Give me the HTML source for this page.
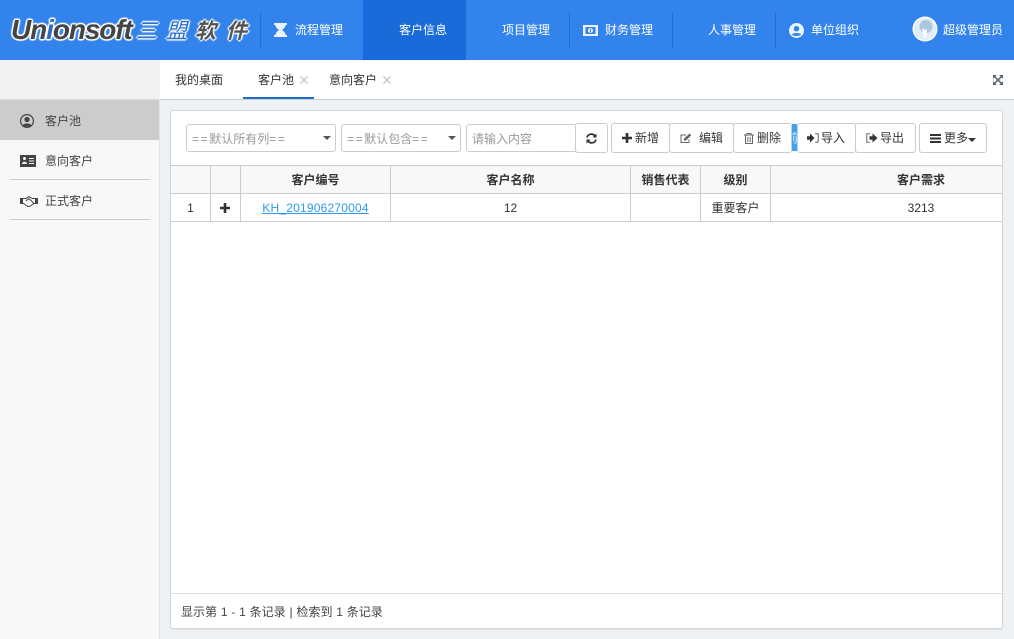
<!DOCTYPE html>
<html lang="zh-CN">
<head>
<meta charset="utf-8">
<title>客户池</title>
<style>
*{box-sizing:border-box}
html,body{margin:0;padding:0;width:1014px;height:639px;overflow:hidden;background:#eff2f4;font-family:"Liberation Sans","Noto Sans CJK SC",sans-serif;font-size:12px;color:#333}
.a{position:absolute;white-space:nowrap}
.hd{position:absolute;left:0;top:0;width:1014px;height:60px;background:#3383ed}
.sep{position:absolute;top:12px;width:1px;height:36px;background:#1f6fd6}
.nav{position:absolute;top:21px;line-height:18px;color:#fff;font-size:12px;white-space:nowrap}
.ni{position:absolute}
.box{position:absolute;border:1px solid #ccc;border-radius:3px;background:#fff;height:28px}
.btn{position:absolute;top:123px;height:30px;border:1px solid #ccc;border-radius:3px;background:#fff;line-height:29px;color:#333;white-space:nowrap}
.btn svg{position:absolute}
.btn span{position:absolute;top:0}
.ln{position:absolute;background:#ccc}
.cell{position:absolute;text-align:center;white-space:nowrap;line-height:30px}
.th{top:165px;font-weight:bold;color:#333}
.td{top:193px;color:#333}
.eq{letter-spacing:1.600px}
.lg{position:absolute;top:15px;font:italic bold 21px/30px 'Noto Sans CJK SC',sans-serif;color:#555;text-shadow:-1.500px 0 1px #fff,1.500px 0 1px #fff,0 -1.500px 1px #fff,0 1.500px 1px #fff}
.bl{color:#2a72d0;font-weight:normal}
</style>
</head>
<body>
<div class="hd"></div>
<div class="a" style="left:11px;top:12px;font:italic bold 28px/36px 'Liberation Sans',sans-serif;color:#454545;letter-spacing:-1.100px;text-shadow:-1.500px 0 1px #fff,1.500px 0 1px #fff,0 -1.500px 1px #fff,0 1.500px 1px #fff,-1px -1px 1px #fff,1px 1px 1px #fff,1px -1px 1px #fff,-1px 1px 1px #fff">Un<span style="color:#2a6dc0">i</span>onsoft</div>
<div class="lg bl" style="left:136px">三</div>
<div class="lg bl" style="left:166px">盟</div>
<div class="lg" style="left:195px">软</div>
<div class="lg" style="left:226px">件</div>

<div class="a" style="left:363px;top:0;width:103px;height:60px;background:#186bd9"></div>
<div class="sep" style="left:260px"></div>
<div class="sep" style="left:569px"></div>
<div class="sep" style="left:672px"></div>
<div class="sep" style="left:775px"></div>

<svg class="ni" style="left:274px;top:23px" width="13" height="14" viewBox="0 0 13 14"><path d="M0 0H13V2H11.500C11.500 5 9 6 8 7C9 8 11.500 9 11.500 12H13V14H0V12H1.500C1.500 9 4 8 5 7C4 6 1.500 5 1.500 2H0Z" fill="#eaf3ff"/></svg>
<div class="nav" style="left:295px">流程管理</div>
<div class="nav" style="left:399px">客户信息</div>
<div class="nav" style="left:502px">项目管理</div>
<svg class="ni" style="left:583px;top:25px" width="15" height="11" viewBox="0 0 15 11"><path fill-rule="evenodd" d="M0 0H15V11H0ZM2.500 2V9H12.500V2Z" fill="#eaf3ff"/><circle cx="7.500" cy="5.500" r="2.500" fill="#eaf3ff"/><path d="M7 4H8V7.500H7Z" fill="#3383ed"/></svg>
<div class="nav" style="left:605px">财务管理</div>
<div class="nav" style="left:708px">人事管理</div>
<svg class="ni" style="left:789px;top:23px" width="15" height="15" viewBox="0 0 15 15"><circle cx="7.500" cy="7.500" r="7.500" fill="#eaf3ff"/><circle cx="7.500" cy="5.700" r="2.700" fill="#3383ed"/><path d="M3 11.700C4 9.500 11 9.500 12 11.700C10.500 13.300 4.500 13.300 3 11.700Z" fill="#3383ed"/></svg>
<div class="nav" style="left:811px">单位组织</div>
<svg class="ni" style="left:912px;top:16px" width="26" height="26" viewBox="0 0 26 26"><circle cx="13" cy="13" r="12.500" fill="#fff"/><circle cx="13" cy="13" r="11" fill="#e0edf6"/><circle cx="14" cy="10.500" r="6.500" fill="#a9c9de"/><path d="M10 12C12 14 13 14 15 13L14 22H12Z" fill="#fff"/></svg>
<div class="nav" style="left:943px">超级管理员</div>

<!-- tab bar -->
<div class="a" style="left:0;top:60px;width:160px;height:40px;background:#f2f2f2;border-bottom:1px solid #ddd"></div>
<div class="a" style="left:160px;top:60px;width:854px;height:40px;background:#fff;border-bottom:1px solid #d0d0d0"></div>
<div class="a" style="left:175px;top:71px;line-height:18px;color:#333">我的桌面</div>
<div class="a" style="left:258px;top:71px;line-height:18px;color:#333">客户池</div>
<div class="a" style="left:243px;top:97px;width:71px;height:2px;background:#1e6fd0"></div>
<svg class="a" style="left:300px;top:76px" width="8" height="8" viewBox="0 0 8 8"><path d="M.5.500L7.500 7.500M7.500.500L.5 7.500" stroke="#c4c4c4" stroke-width="1.300"/></svg>
<div class="a" style="left:329px;top:71px;line-height:18px;color:#333">意向客户</div>
<svg class="a" style="left:383px;top:76px" width="8" height="8" viewBox="0 0 8 8"><path d="M.5.500L7.500 7.500M7.500.500L.5 7.500" stroke="#c4c4c4" stroke-width="1.300"/></svg>
<svg class="a" style="left:993px;top:75px" width="10" height="10" viewBox="0 0 10 10"><path d="M0 0H3.800L0 3.800ZM10 0V3.800L6.200 0ZM0 10V6.200L3.800 10ZM10 10H6.200L10 6.200Z" fill="#56606c"/><path d="M1.500 1.500L8.500 8.500M8.500 1.500L1.500 8.500" stroke="#56606c" stroke-width="1.500"/></svg>

<!-- sidebar -->
<div class="a" style="left:0;top:100px;width:160px;height:539px;background:#f8f8f8;border-right:1px solid #e2e5e7"></div>
<div class="a" style="left:0;top:100px;width:159px;height:40px;background:#ccc"></div>
<svg class="a" style="left:20px;top:114px" width="14" height="14" viewBox="0 0 14 14"><circle cx="7" cy="7" r="6.400" fill="none" stroke="#444" stroke-width="1.200"/><circle cx="7" cy="5.500" r="2.600" fill="#444"/><path d="M2.500 11.500C3.500 8.800 10.500 8.800 11.500 11.500C10 13.300 4 13.300 2.500 11.500Z" fill="#444"/></svg>
<div class="a" style="left:45px;top:112px;line-height:18px;color:#444">客户池</div>
<svg class="a" style="left:20px;top:155px" width="16" height="12" viewBox="0 0 16 12"><path fill-rule="evenodd" d="M0 0H16V12H0ZM3 3.500A1.500 1.500 0 0 0 6 3.500A1.500 1.500 0 0 0 3 3.500ZM2 9H7C7 6 2 6 2 9ZM9 3V4H14V3ZM9 5.500V6.500H14V5.500ZM9 8V9H14V8Z" fill="#444"/></svg>
<div class="a" style="left:45px;top:152px;line-height:18px;color:#444">意向客户</div>
<div class="ln" style="left:10px;top:179px;width:140px;height:1px"></div>
<svg class="a" style="left:20px;top:195px" width="18" height="12" viewBox="0 0 18 12"><path d="M0 3H2.500V9H0ZM15.500 3H18V9H15.500Z" fill="#444"/><path d="M2.500 3.500L6 3.500L9 1.500L12 3.500H15.500V8.500H14L9.500 11.500H8L3.500 8.500H2.500Z M6 6L8.500 3.800L10.500 5L14 8.500" fill="none" stroke="#444" stroke-width="1"/></svg>
<div class="a" style="left:45px;top:192px;line-height:18px;color:#444">正式客户</div>
<div class="ln" style="left:10px;top:219px;width:140px;height:1px"></div>

<!-- panel -->
<div class="a" style="left:170px;top:110px;width:833px;height:519px;background:#fff;border:1px solid #d6d6d6;border-radius:3px;box-shadow:0 1px 1px rgba(0,0,0,.08)"></div>

<!-- toolbar -->
<div class="box" style="left:186px;top:124px;width:150px"></div>
<div class="a" style="left:192px;top:131px;line-height:16px;color:#999"><span class="eq">==</span>默认所有列<span class="eq">==</span></div>
<div class="a" style="left:323px;top:136px;width:0;height:0;border-left:4px solid transparent;border-right:4px solid transparent;border-top:4px solid #555"></div>
<div class="box" style="left:341px;top:124px;width:120px"></div>
<div class="a" style="left:347px;top:131px;line-height:16px;color:#999"><span class="eq">==</span>默认包含<span class="eq">==</span></div>
<div class="a" style="left:448px;top:136px;width:0;height:0;border-left:4px solid transparent;border-right:4px solid transparent;border-top:4px solid #555"></div>
<div class="box" style="left:466px;top:124px;width:112px"></div>
<div class="a" style="left:472px;top:131px;line-height:16px;color:#999">请输入内容</div>

<div class="btn" style="left:575px;width:33px"><svg style="left:10px;top:9px" width="11" height="11" viewBox="0 0 11 11"><path d="M1 4.500A4.500 4.500 0 0 1 9 3M10 6.500A4.500 4.500 0 0 1 2 8" fill="none" stroke="#333" stroke-width="1.700"/><path d="M10.500 .5V4.500H6.500ZM.5 10.500V6.500H4.500Z" fill="#333"/></svg></div>
<div class="btn" style="left:611px;width:59px"><svg style="left:10px;top:9px" width="10" height="10" viewBox="0 0 10 10"><path d="M3.700 0H6.300V3.700H10V6.300H6.300V10H3.700V6.300H0V3.700H3.700Z" fill="#333"/></svg><span style="left:23px">新增</span></div>
<div class="btn" style="left:669px;width:65px"><svg style="left:10px;top:9px" width="12" height="11" viewBox="0 0 12 11"><path d="M9 6.500V9.500H1V2H6" fill="none" stroke="#666" stroke-width="1"/><path d="M4 5.500L9.500 .5L11.300 2.200L6 7.500H4Z" fill="#666"/></svg><span style="left:29px">编辑</span></div>
<div class="btn" style="left:733px;width:59px"><svg style="left:10px;top:9px" width="10" height="11" viewBox="0 0 10 11"><path d="M0 2H10M3 2V.5H7V2M1.500 2.500V10.500H8.500V2.500M3.800 4V9M6.200 4V9" fill="none" stroke="#666" stroke-width="1"/></svg><span style="left:23px">删除</span></div>
<div class="a" style="left:792px;top:124px;width:5px;height:27px;background:#3ea3f2;overflow:hidden;color:#dff0ff;line-height:28px;text-indent:-6px">前</div>
<div class="btn" style="left:797px;width:59px"><svg style="left:9px;top:9px" width="12" height="10" viewBox="0 0 12 10"><path d="M0 3.200H3V.5L7.500 5L3 9.500V6.800H0Z" fill="#333"/><path d="M8 .8H11.200V9.200H8" fill="none" stroke="#555" stroke-width=".9"/></svg><span style="left:23px">导入</span></div>
<div class="btn" style="left:855px;width:61px"><svg style="left:10px;top:9px" width="12" height="10" viewBox="0 0 12 10"><path d="M4 .8H.8V9.200H4" fill="none" stroke="#555" stroke-width=".9"/><path d="M3.500 3.200H6.500V.5L11.500 5L6.500 9.500V6.800H3.500Z" fill="#333"/></svg><span style="left:24px">导出</span></div>
<div class="btn" style="left:919px;width:68px"><svg style="left:10px;top:10px" width="11" height="9" viewBox="0 0 11 9"><path d="M0 0H11V2H0ZM0 3.500H11V5.500H0ZM0 7H11V9H0Z" fill="#333"/></svg><span style="left:24px">更多</span><div style="position:absolute;left:48px;top:14px;width:0;height:0;border-left:4px solid transparent;border-right:4px solid transparent;border-top:4px solid #333"></div></div>

<!-- table -->
<div class="a" style="left:171px;top:165px;width:831px;height:28px;background:#f8f8f8"></div>
<div class="ln" style="left:171px;top:165px;width:831px;height:1px"></div>
<div class="ln" style="left:171px;top:193px;width:831px;height:1px"></div>
<div class="ln" style="left:171px;top:221px;width:831px;height:1px"></div>
<div class="ln" style="left:210px;top:165px;width:1px;height:57px"></div>
<div class="ln" style="left:240px;top:165px;width:1px;height:57px"></div>
<div class="ln" style="left:390px;top:165px;width:1px;height:57px"></div>
<div class="ln" style="left:630px;top:165px;width:1px;height:57px"></div>
<div class="ln" style="left:700px;top:165px;width:1px;height:57px"></div>
<div class="ln" style="left:770px;top:165px;width:1px;height:57px"></div>

<div class="cell th" style="left:241px;width:149px">客户编号</div>
<div class="cell th" style="left:391px;width:239px">客户名称</div>
<div class="cell th" style="left:631px;width:69px">销售代表</div>
<div class="cell th" style="left:701px;width:69px">级别</div>
<div class="cell th" style="left:771px;width:300px">客户需求</div>

<div class="cell td" style="left:171px;width:39px">1</div>
<svg class="a" style="left:220px;top:203px" width="10" height="10" viewBox="0 0 10 10"><path d="M3.700 0H6.300V3.700H10V6.300H6.300V10H3.700V6.300H0V3.700H3.700Z" fill="#333"/></svg>
<div class="cell td" style="left:241px;width:149px;color:#2d9cf0;text-decoration:underline;letter-spacing:.2px">KH_201906270004</div>
<div class="cell td" style="left:391px;width:239px">12</div>
<div class="cell td" style="left:701px;width:69px">重要客户</div>
<div class="cell td" style="left:771px;width:300px">3213</div>

<!-- footer -->
<div class="ln" style="left:171px;top:593px;width:831px;height:1px;background:#ddd"></div>
<div class="a" style="left:181px;top:603px;line-height:18px;color:#444;word-spacing:.5px">显示第 1 - 1 条记录 | 检索到 1 条记录</div>
</body>
</html>
